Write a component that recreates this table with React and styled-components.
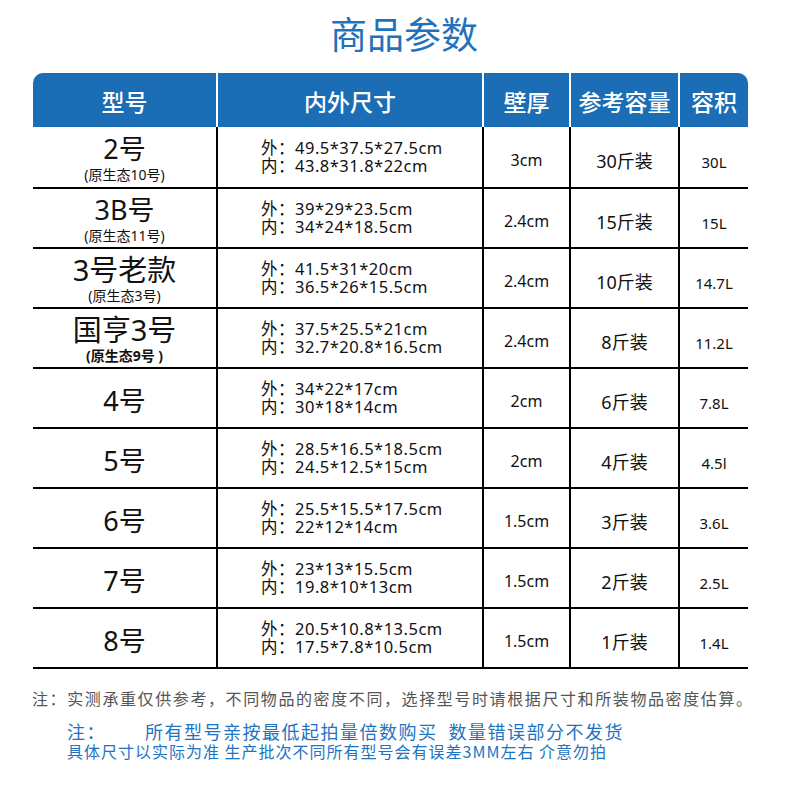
import React from "react";
import styled, { createGlobalStyle } from "styled-components";

const Global = createGlobalStyle`
  html, body { margin: 0; padding: 0; background: #fff; }
  body { font-family: "Noto Sans", "Noto Sans CJK SC", sans-serif; color: #111; }
`;

const Page = styled.div`
  width: 792px;
  height: 792px;
  background: #fff;
  overflow: hidden;
`;

const Title = styled.h1`
  margin: 0;
  height: 73px;
  box-sizing: border-box;
  padding: 13px 0 0 16px;
  text-align: center;
  font-family: "Noto Sans CJK SC", sans-serif;
  font-weight: 400;
  font-size: 37px;
  line-height: 40px;
  color: #1f72bb;
`;

const Table = styled.div`
  margin-left: 33px;
  width: 715px;
`;

const COLS = "185px 266px 87px 109px 68px";

const HeaderRow = styled.div`
  display: grid;
  grid-template-columns: ${COLS};
  height: 54px;
  background: #1b6db6;
  border-radius: 10px 10px 0 0;
  overflow: hidden;
`;

const HeadCell = styled.div`
  display: flex;
  align-items: center;
  justify-content: center;
  box-sizing: border-box;
  border-right: ${(p) => (p.$last ? "none" : "2px solid #fff")};
  color: #fff;
  font-family: "Noto Sans CJK SC", sans-serif;
  font-weight: 500;
  font-size: 23px;
  padding-top: 2px;
`;

const Row = styled.div`
  display: grid;
  grid-template-columns: ${COLS};
  height: ${(p) => p.$h}px;
  box-sizing: border-box;
  border-bottom: 2px solid #000;
`;

const Cell = styled.div`
  display: flex;
  flex-direction: column;
  align-items: center;
  justify-content: center;
  box-sizing: border-box;
  border-right: ${(p) => (p.$last ? "none" : "2px solid #000")};
  padding-top: ${(p) => p.$shift || 0}px;
`;

const ModelName = styled.div`
  font-family: "Noto Sans", "Noto Sans CJK SC", sans-serif;
  font-size: ${(p) => p.$size}px;
  line-height: 30px;
  color: #111;
`;

const ModelSub = styled.div`
  margin-top: 3px;
  font-family: "Noto Sans", "Noto Sans CJK SC", sans-serif;
  font-size: 14px;
  line-height: 16px;
  font-weight: ${(p) => (p.$bold ? 700 : 400)};
  color: #111;
`;

const DimCell = styled.div`
  display: flex;
  flex-direction: column;
  justify-content: center;
  box-sizing: border-box;
  border-right: 2px solid #000;
  padding-left: 43px;
`;

const DimLine = styled.div`
  font-family: "Noto Sans", "Noto Sans CJK SC", sans-serif;
  font-size: 16.5px;
  line-height: 18px;
  letter-spacing: 0.5px;
  color: #111;
  white-space: nowrap;
`;

const Value = styled.span`
  font-family: "Noto Sans", "Noto Sans CJK SC", sans-serif;
  font-size: ${(p) => p.$size}px;
  color: #111;
  white-space: nowrap;
`;

const GreyNote = styled.p`
  margin: 19px 0 0 32px;
  font-family: "Noto Sans CJK SC", sans-serif;
  font-size: 16px;
  line-height: 20px;
  letter-spacing: 1.6px;
  color: #555;
  white-space: nowrap;
`;

const BlueNote = styled.p`
  margin: ${(p) => p.$mt}px 0 0 67px;
  display: flex;
  font-family: "Noto Sans CJK SC", sans-serif;
  font-size: ${(p) => p.$size}px;
  line-height: ${(p) => p.$lh}px;
  letter-spacing: ${(p) => p.$ls}px;
  color: #1e74c2;
  white-space: nowrap;
`;

const NoteLabel = styled.span`
  display: inline-block;
  width: 78px;
`;

const rows = [
  { name: "2号", sub: "(原生态10号)", size: 27, out: "49.5*37.5*27.5cm", inn: "43.8*31.8*22cm", wall: "3cm", cap: "30斤装", vol: "30L", h: 62 },
  { name: "3B号", sub: "(原生态11号)", size: 27, out: "39*29*23.5cm", inn: "34*24*18.5cm", wall: "2.4cm", cap: "15斤装", vol: "15L", h: 60 },
  { name: "3号老款", sub: "(原生态3号)", size: 29, out: "41.5*31*20cm", inn: "36.5*26*15.5cm", wall: "2.4cm", cap: "10斤装", vol: "14.7L", h: 60 },
  { name: "国亨3号", sub: "(原生态9号 )", bold: true, size: 29, out: "37.5*25.5*21cm", inn: "32.7*20.8*16.5cm", wall: "2.4cm", cap: "8斤装", vol: "11.2L", h: 60 },
  { name: "4号", size: 27, out: "34*22*17cm", inn: "30*18*14cm", wall: "2cm", cap: "6斤装", vol: "7.8L", h: 60 },
  { name: "5号", size: 27, out: "28.5*16.5*18.5cm", inn: "24.5*12.5*15cm", wall: "2cm", cap: "4斤装", vol: "4.5l", h: 60 },
  { name: "6号", size: 27, out: "25.5*15.5*17.5cm", inn: "22*12*14cm", wall: "1.5cm", cap: "3斤装", vol: "3.6L", h: 60 },
  { name: "7号", size: 27, out: "23*13*15.5cm", inn: "19.8*10*13cm", wall: "1.5cm", cap: "2斤装", vol: "2.5L", h: 60 },
  { name: "8号", size: 27, out: "20.5*10.8*13.5cm", inn: "17.5*7.8*10.5cm", wall: "1.5cm", cap: "1斤装", vol: "1.4L", h: 60 },
];

const headers = ["型号", "内外尺寸", "壁厚", "参考容量", "容积"];

export default function App() {
  return (
    <Page>
      <Global />
      <Title>商品参数</Title>
      <Table>
        <HeaderRow>
          {headers.map((h, i) => (
            <HeadCell key={h} $last={i === headers.length - 1}>
              {h}
            </HeadCell>
          ))}
        </HeaderRow>
        {rows.map((r) => (
          <Row key={r.name} $h={r.h}>
            <Cell $shift={r.sub ? 2 : 6}>
              <ModelName $size={r.size}>{r.name}</ModelName>
              {r.sub && <ModelSub $bold={r.bold}>{r.sub}</ModelSub>}
            </Cell>
            <DimCell>
              <DimLine>外：{r.out}</DimLine>
              <DimLine>内：{r.inn}</DimLine>
            </DimCell>
            <Cell $shift={6}>
              <Value $size={16}>{r.wall}</Value>
            </Cell>
            <Cell $shift={6}>
              <Value $size={18}>{r.cap}</Value>
            </Cell>
            <Cell $last $shift={10}>
              <Value $size={15}>{r.vol}</Value>
            </Cell>
          </Row>
        ))}
      </Table>
      <GreyNote>注：实测承重仅供参考，不同物品的密度不同，选择型号时请根据尺寸和所装物品密度估算。</GreyNote>
      <BlueNote $mt={13} $size={18} $ls={1.5} $lh={21}>
        <NoteLabel>注：</NoteLabel>
        <span>所有型号亲按最低起拍量倍数购买&nbsp;&nbsp;数量错误部分不发货</span>
      </BlueNote>
      <BlueNote $mt={0} $size={16} $ls={1} $lh={19}>
        具体尺寸以实际为准&nbsp;生产批次不同所有型号会有误差3MM左右&nbsp;介意勿拍
      </BlueNote>
    </Page>
  );
}
